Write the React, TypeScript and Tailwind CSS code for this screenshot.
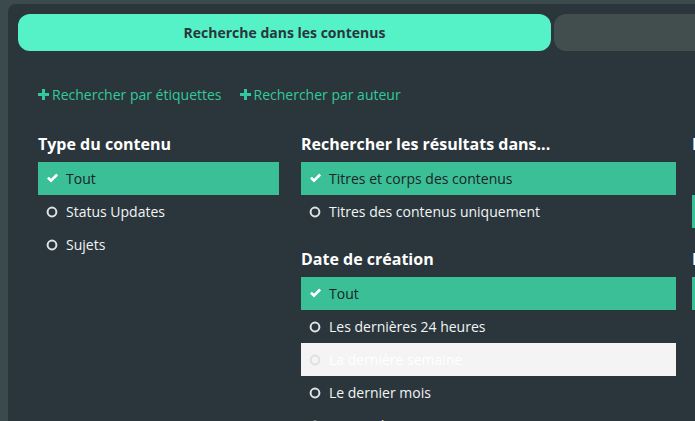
type Option = { label: string; selected?: boolean; hover?: boolean }

type Group = { title: string; options: Option[] }

const columns: { width: string; groups: Group[] }[] = [
  {
    width: 'w-[241px]',
    groups: [
      {
        title: 'Type du contenu',
        options: [{ label: 'Tout', selected: true }, { label: 'Status Updates' }, { label: 'Sujets' }],
      },
    ],
  },
  {
    width: 'w-[375px]',
    groups: [
      {
        title: 'Rechercher les résultats dans...',
        options: [
          { label: 'Titres et corps des contenus', selected: true },
          { label: 'Titres des contenus uniquement' },
        ],
      },
      {
        title: 'Date de création',
        options: [
          { label: 'Tout', selected: true },
          { label: 'Les dernières 24 heures' },
          { label: 'La dernière semaine', hover: true },
          { label: 'Le dernier mois' },
          { label: 'Les six derniers mois' },
        ],
      },
    ],
  },
  {
    width: 'w-[240px]',
    groups: [
      {
        title: 'Pertinence',
        options: [{ label: 'Tous les membres' }, { label: 'Membres suivis', selected: true }],
      },
      {
        title: 'Dernière mise à jour',
        options: [{ label: 'Tout', selected: true }, { label: 'Hier' }],
      },
    ],
  },
]

function CheckIcon() {
  return (
    <svg width="13" height="11" viewBox="0 0 13 11" className="text-white">
      <path d="M1 5.6 L2.9 3.7 L5 5.8 L10.2 0.6 L12.1 2.5 L5 9.6 Z" fill="currentColor" />
    </svg>
  )
}

function CircleIcon({ light }: { light?: boolean }) {
  return (
    <svg width="12" height="12" viewBox="0 0 12 12">
      <circle cx="6" cy="6" r="4.4" fill="none" stroke={light ? '#e0e0e0' : '#dfe3e6'} strokeWidth="2" />
    </svg>
  )
}

function PlusIcon() {
  return (
    <svg width="11" height="11" viewBox="0 0 11 11">
      <path d="M4 0 H7 V4 H11 V7 H7 V11 H4 V7 H0 V4 H4 Z" fill="currentColor" />
    </svg>
  )
}

function OptionRow({ option }: { option: Option }) {
  const bg = option.selected ? 'bg-[#3abf96] text-[#1b2428]' : option.hover ? 'bg-[#f4f4f4] text-white' : 'text-[#f2f4f5]'
  return (
    <div className={`flex items-center h-[33px] pl-[8px] ${bg}`}>
      <span className="w-[20px] flex items-center">
        {option.selected ? <CheckIcon /> : <CircleIcon light={option.hover} />}
      </span>
      <span className="text-[14px] leading-none">{option.label}</span>
    </div>
  )
}

export default function App() {
  return (
    <div className="w-[695px] h-[421px] overflow-hidden bg-[#3a4a4d] pl-[8px] pt-[4px]" style={{ fontFamily: '"Open Sans", "Noto Sans", sans-serif' }}>
      <div className="h-full bg-[#2a363b] rounded-tl-[8px] pl-[10px] pt-[10px] overflow-hidden">
        <div className="flex gap-[3px] w-[900px]">
          <div className="w-[533px] h-[37px] rounded-[12px] bg-[#55f2c8] flex items-center justify-center text-[14px] font-bold text-[#2a363b]">
            Recherche dans les contenus
          </div>
          <div className="w-[300px] h-[37px] rounded-[12px] bg-[#424d4e]" />
        </div>

        <div className="flex gap-[18px] pl-[20px] mt-[33px] text-[14px] text-[#33c99c]">
          <span className="flex items-center gap-[3px]">
            <PlusIcon />
            Rechercher par étiquettes
          </span>
          <span className="flex items-center gap-[3px]">
            <PlusIcon />
            Rechercher par auteur
          </span>
        </div>

        <div className="flex pl-[20px] mt-[29px] w-[1000px]">
          {columns.map((col, ci) => (
            <div key={ci} className={`${col.width} shrink-0 ${ci === 0 ? 'mr-[22px]' : 'mr-[16px]'}`}>
              {col.groups.map(group => (
                <div key={group.title} className="mb-[21px]">
                  <h3 className="text-[16px] font-bold text-white leading-[20px] h-[28px]">{group.title}</h3>
                  {group.options.map(opt => (
                    <OptionRow key={opt.label} option={opt} />
                  ))}
                </div>
              ))}
            </div>
          ))}
        </div>
      </div>
    </div>
  )
}
